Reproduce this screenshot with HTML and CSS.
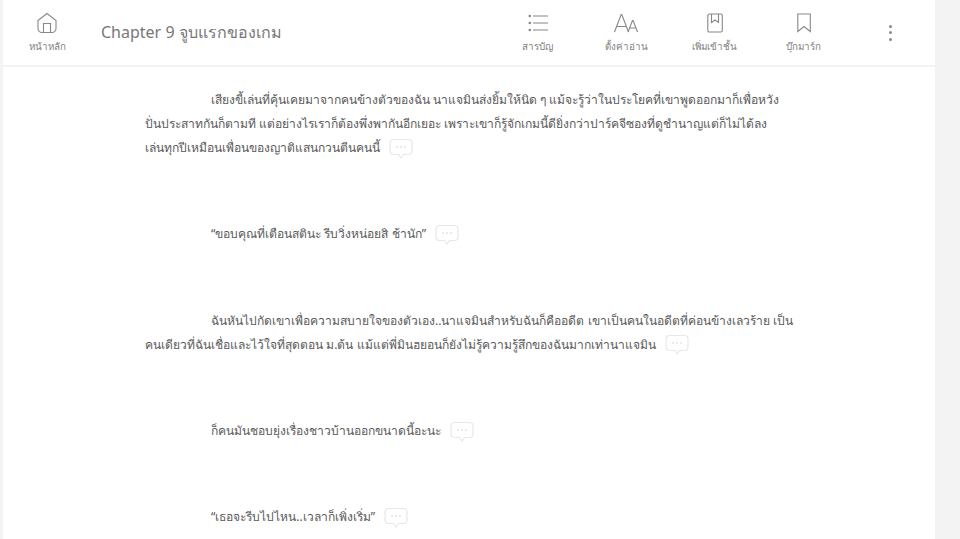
FILE: index.html
```html
<!DOCTYPE html>
<html lang="th">
  <head>
    <meta charset="UTF-8" />
    <title>Chapter 9 จูบแรกของเกม</title>
    <link rel="stylesheet" href="styles.css">
  </head>
  <body>
    <div class="page">
      <div class="top_bar">
        <a class="nav_item home_item">
          <svg class="nav_icon" width="22" height="22" viewBox="0 0 22 22">
            <path d="M2 8.500 11 1.500l9 7V16.500a4 4 0 0 1-4 4H6a4 4 0 0 1-4-4z" />
            <path d="M7.500 20.500v-9h7v9" />
          </svg>
          <span>หน้าหลัก</span>
        </a>
        <h1 class="chapter_title">Chapter 9 จูบแรกของเกม</h1>
        <div class="nav_group">
          <a class="nav_item">
            <svg class="nav_icon" width="22" height="22" viewBox="0 0 22 22">
              <path d="M6 4h15M6 11h15M6 18h15" />
              <circle class="dot" cx="2.800" cy="4" r="1.300" />
              <circle class="dot" cx="2.800" cy="11" r="1.300" />
              <circle class="dot" cx="2.800" cy="18" r="1.300" />
            </svg>
            <span>สารบัญ</span>
          </a>
          <a class="nav_item">
            <svg class="nav_icon" width="26" height="22" viewBox="0 0 26 22">
              <path d="M1.500 20 8.200 2.500h.6L15.500 20M3.800 14.500h9.400" />
              <path d="M15 20 19.500 8.500h.6L24.500 20M16.500 16h6.500" />
            </svg>
            <span>ตั้งค่าอ่าน</span>
          </a>
          <a class="nav_item">
            <svg class="nav_icon" width="22" height="22" viewBox="0 0 22 22">
              <rect x="3.800" y="2" width="14.500" height="18" rx="1.500" />
              <path d="M7.500 2v8.500l3.500-2.500 3.500 2.500V2" />
            </svg>
            <span>เพิ่มเข้าชั้น</span>
          </a>
          <a class="nav_item">
            <svg class="nav_icon" width="22" height="22" viewBox="0 0 22 22">
              <path d="M4.800 2h12.500v17.500L11 14.500l-6.200 5z" />
            </svg>
            <span>บุ๊กมาร์ก</span>
          </a>
        </div>
        <div class="more_dots"><i></i><i></i><i></i></div>
      </div>

      <div class="story">
        <p>เสียงขี้เล่นที่คุ้นเคยมาจากคนข้างตัวของฉัน นาแจมินส่งยิ้มให้นิด ๆ แม้จะรู้ว่าในประโยคที่เขาพูดออกมาก็เพื่อหวังปั่นประสาทกันก็ตามที แต่อย่างไรเราก็ต้องพึ่งพากันอีกเยอะ เพราะเขาก็รู้จักเกมนี้ดียิ่งกว่าปาร์คจีซองที่ดูชำนาญแต่ก็ไม่ได้ลง<br />เล่นทุกปีเหมือนเพื่อนของญาติแสนกวนตีนคนนี้ <span class="comment"><svg width="24" height="22" viewBox="0 0 24 22"><path d="M4.500 1.500h15a3.500 3.500 0 0 1 3.500 3.500v8a3.500 3.500 0 0 1-3.500 3.500h-5L12 20l-2.500-3.500h-5A3.500 3.500 0 0 1 1 13V5a3.500 3.500 0 0 1 3.500-3.500z" /><circle cx="8" cy="9" r="1" /><circle cx="12" cy="9" r="1" /><circle cx="16" cy="9" r="1" /></svg></span></p>
        <p>“ขอบคุณที่เตือนสตินะ รีบวิ่งหน่อยสิ ช้านัก” <span class="comment"><svg width="24" height="22" viewBox="0 0 24 22"><path d="M4.500 1.500h15a3.500 3.500 0 0 1 3.500 3.500v8a3.500 3.500 0 0 1-3.500 3.500h-5L12 20l-2.500-3.500h-5A3.500 3.500 0 0 1 1 13V5a3.500 3.500 0 0 1 3.500-3.500z" /><circle cx="8" cy="9" r="1" /><circle cx="12" cy="9" r="1" /><circle cx="16" cy="9" r="1" /></svg></span></p>
        <p>ฉันหันไปกัดเขาเพื่อความสบายใจของตัวเอง..นาแจมินสำหรับฉันก็คืออดีต เขาเป็นคนในอดีตที่ค่อนข้างเลวร้าย เป็นคนเดียวที่ฉันเชื่อและไว้ใจที่สุดตอน ม.ต้น แม้แต่พี่มินฮยอนก็ยังไม่รู้ความรู้สึกของฉันมากเท่านาแจมิน <span class="comment"><svg width="24" height="22" viewBox="0 0 24 22"><path d="M4.500 1.500h15a3.500 3.500 0 0 1 3.500 3.500v8a3.500 3.500 0 0 1-3.500 3.500h-5L12 20l-2.500-3.500h-5A3.500 3.500 0 0 1 1 13V5a3.500 3.500 0 0 1 3.500-3.500z" /><circle cx="8" cy="9" r="1" /><circle cx="12" cy="9" r="1" /><circle cx="16" cy="9" r="1" /></svg></span></p>
        <p>ก็คนมันชอบยุ่งเรื่องชาวบ้านออกขนาดนี้อะนะ <span class="comment"><svg width="24" height="22" viewBox="0 0 24 22"><path d="M4.500 1.500h15a3.500 3.500 0 0 1 3.500 3.500v8a3.500 3.500 0 0 1-3.500 3.500h-5L12 20l-2.500-3.500h-5A3.500 3.500 0 0 1 1 13V5a3.500 3.500 0 0 1 3.500-3.500z" /><circle cx="8" cy="9" r="1" /><circle cx="12" cy="9" r="1" /><circle cx="16" cy="9" r="1" /></svg></span></p>
        <p>“เธอจะรีบไปไหน..เวลาก็เพิ่งเริ่ม” <span class="comment"><svg width="24" height="22" viewBox="0 0 24 22"><path d="M4.500 1.500h15a3.500 3.500 0 0 1 3.500 3.500v8a3.500 3.500 0 0 1-3.500 3.500h-5L12 20l-2.500-3.500h-5A3.500 3.500 0 0 1 1 13V5a3.500 3.500 0 0 1 3.500-3.500z" /><circle cx="8" cy="9" r="1" /><circle cx="12" cy="9" r="1" /><circle cx="16" cy="9" r="1" /></svg></span></p>
      </div>
    </div>
  </body>
</html>
```

FILE: styles.css
```css
body {
  margin: 0;
  height: 539px;
  overflow: hidden;
  background: #f3f3f3;
  font-family: "Noto Sans", "Open Sans", sans-serif;
  color: #5a5a5a;
}
.page {
  width: 932px;
  height: 539px;
  margin-left: 3px;
  background: #fff;
}
.top_bar {
  display: flex;
  align-items: center;
  height: 65px;
  border-bottom: 2px solid #f3f3f3;
}
.nav_item {
  display: flex;
  flex-direction: column;
  align-items: center;
  gap: 6px;
  width: 88.700px;
  font-size: 9.800px;
  line-height: 14px;
  color: #808080;
}
.home_item {
  width: 88px;
}
.nav_icon {
  fill: none;
  stroke: #888;
  stroke-width: 1.100;
}
.nav_icon .dot {
  fill: #888;
  stroke: none;
}
.chapter_title {
  margin: 0;
  flex: 1;
  font-size: 16px;
  font-weight: 400;
  color: #777;
  padding-left: 10px;
}
.nav_group {
  display: flex;
  margin-right: 41px;
}
.more_dots {
  display: flex;
  flex-direction: column;
  gap: 3.500px;
  margin-right: 43px;
}
.more_dots i {
  width: 3px;
  height: 3px;
  border-radius: 50%;
  background: #888;
}
.story {
  width: 650px;
  margin-left: 142px;
  padding-top: 21px;
  font-size: 12.100px;
  line-height: 24px;
}
.story p {
  margin: 0 0 62.300px;
  text-indent: 66px;
}
.comment {
  display: inline-block;
  vertical-align: middle;
  margin-left: 6px;
  text-indent: 0;
  height: 22px;
}
.comment svg {
  fill: none;
  stroke: #e8e8e8;
  stroke-width: 1.200;
}
.comment circle {
  fill: #e3e3e3;
  stroke: none;
}
```
